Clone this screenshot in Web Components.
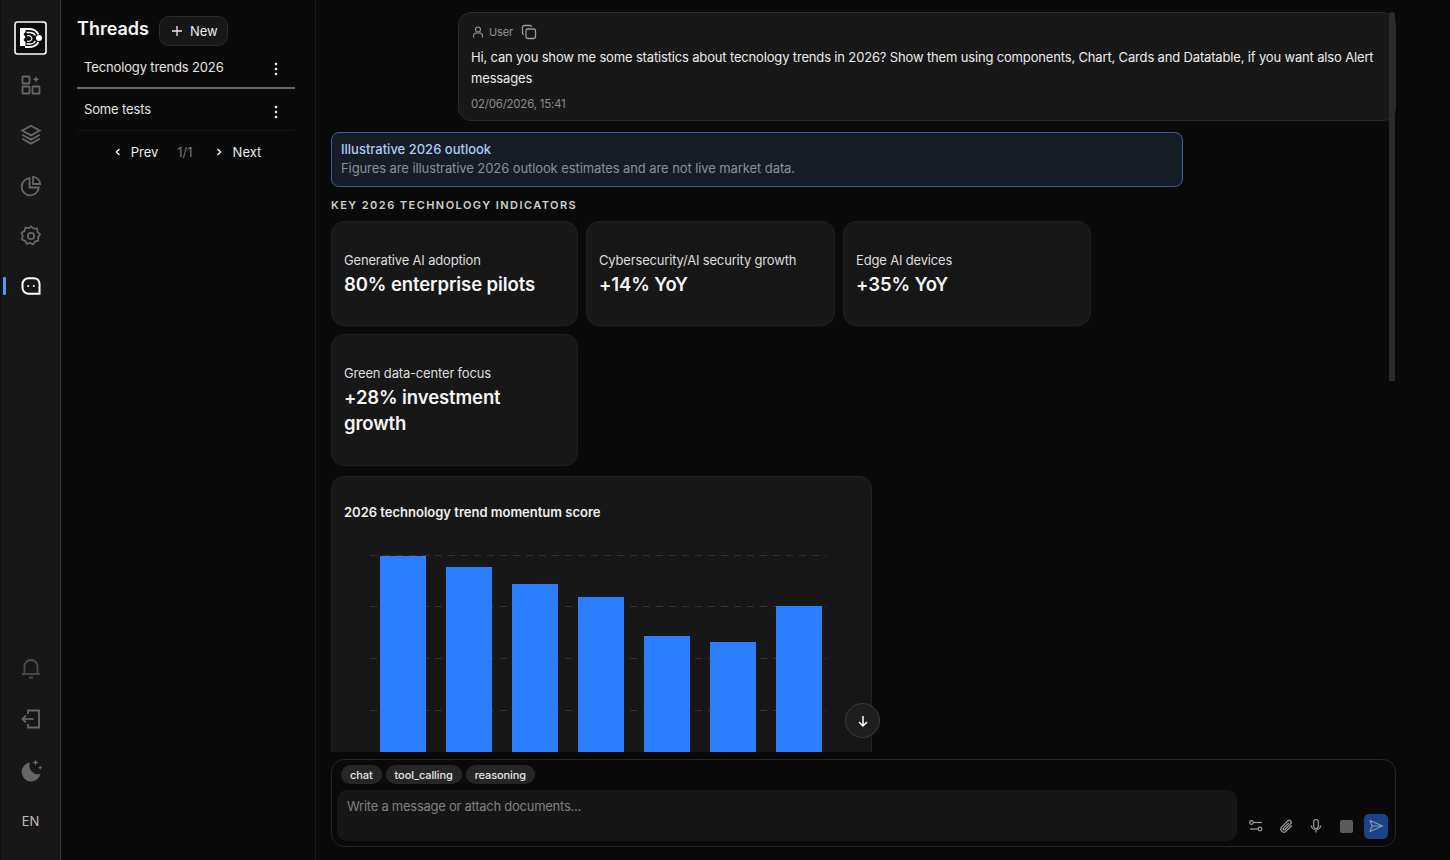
<!DOCTYPE html>
<html lang="en">
<head>
<meta charset="utf-8">
<title>Threads</title>
<style>
  html, body { margin: 0; height: 100%; background: #0a0a0a; }
  body { font-family: Inter, "Liberation Sans", sans-serif; color: #f2f2f2; overflow: hidden; }
</style>
</head>
<body>
<app-shell>
  <side-rail slot="rail"></side-rail>
  <thread-panel slot="threads"></thread-panel>
  <chat-view slot="chat"></chat-view>
</app-shell>

<script>
  class AppShell extends HTMLElement {
    constructor() {
      super();
      this.attachShadow({ mode: "open" }).innerHTML = `
      <style>
        :host { display: grid; grid-template-columns: 61px 255px 1fr; height: 860px; width: 1450px; }
      </style>
      <slot name="rail"></slot><slot name="threads"></slot><slot name="chat"></slot>`;
    }
  }

  const railIcons = {
    grid: `<rect x="3.5" y="3.5" width="7" height="7" rx=".6"/><rect x="3.5" y="13.5" width="7" height="7" rx=".6"/><rect x="13.5" y="13.5" width="7" height="7" rx=".6"/><path d="M17 3l1 2.2 2.4 1-2.4 1L17 10l-1-2.8-2.4-1 2.4-1z" fill="currentColor" stroke="none"/>`,
    layers: `<path d="M12 2.8l8.8 4.8L12 12.4 3.2 7.6z"/><path d="M3.2 11.8l8.8 4.8 8.8-4.8"/><path d="M3.2 15.8l8.8 4.8 8.8-4.8"/>`,
    pie: `<path d="M10.500 4.200a8.600 8.600 0 1 0 9.300 9.300h-9.300z"/><path d="M14 2.800a7.600 7.600 0 0 1 7.200 7.200H14z"/>`,
    gear: `<path d="M12 2.400l2.600 2.300 3.500-.2.400 3.500 2.600 2.300-2 2.900.3 3.500-3.400.8-2 2.900-3-1.700-3.200 1.200-1.600-3.100-3.300-1.300.9-3.400-1.300-3.200 3-1.800 1-3.400 3.400.5z" stroke-linejoin="round"/><circle cx="12" cy="12" r="3.200"/>`,
    chat: `<path d="M9.500 4.200h5.500a5.500 5.500 0 0 1 5.500 5.500v10.100H9.500A6 6 0 0 1 3.500 13.800V10.200a6 6 0 0 1 6-6z" stroke-width="2"/><circle cx="9.200" cy="12" r="1" fill="currentColor" stroke="none"/><circle cx="14.800" cy="12" r="1" fill="currentColor" stroke="none"/>`,
    bell: `<path d="M5.500 18V10.500a6.500 6.500 0 0 1 13 0V18"/><path d="M2.800 18h18.400"/><path d="M10 21.500h4"/>`,
    logout: `<path d="M9 7V3.500h11v17H9V17"/><path d="M14.500 12H3.500"/><path d="M7 8.500L3.500 12 7 15.500"/>`,
    moon: `<path d="M11 4.500a9.500 9.500 0 1 0 10.500 11.200A8.500 8.500 0 0 1 11 4.500z" fill="currentColor" stroke="none"/><path d="M16.500 1.500l.9 2.100 2.100.9-2.100.9-.9 2.100-.9-2.100-2.100-.9 2.100-.9zM21.200 7.500l.7 1.500 1.500.7-1.500.7-.7 1.500-.7-1.500-1.500-.7 1.500-.7z" fill="currentColor" stroke="none"/>`,
  };

  class RailItem extends HTMLElement {
    constructor() {
      super();
      this.attachShadow({ mode: "open" });
    }
    connectedCallback() {
      const active = this.hasAttribute("active");
      const dim = this.hasAttribute("dim");
      this.shadowRoot.innerHTML = `
      <style>
        :host { display: flex; position: relative; height: 51px; align-items: center; justify-content: center; color: ${active ? "#fff" : dim ? "#4d4d4d" : "#666"}; }
        svg { width: 24px; height: 24px; fill: none; stroke: currentColor; stroke-width: 1.800; }
        i { position: absolute; left: 2px; top: 16px; width: 3px; height: 18px; border-radius: 1px; background: #5796ea; }
      </style>
      ${active ? "<i></i>" : ""}
      <svg viewBox="0 0 24 24">${railIcons[this.getAttribute("icon")]}</svg>`;
    }
  }

  class SideRail extends HTMLElement {
    constructor() {
      super();
      this.attachShadow({ mode: "open" }).innerHTML = `
      <style>
        :host { display: flex; flex-direction: column; background: #171717; border-right: 1px solid #3d3d3d; border-left: 1px solid #0e0e0e; box-sizing: border-box; padding: 20px 0 14px; }
        .logo { display: block; width: 33px; height: 34px; margin: 1px auto 5px; }
        .top { display: flex; flex-direction: column; }
        .top rail-item { height: 50.250px; }
        .bottom { margin-top: auto; display: flex; flex-direction: column; }
        .lang { height: 51px; display: flex; align-items: center; justify-content: center; font-size: 13px; color: #bdbdbd; }
      </style>
      <svg class="logo" viewBox="0 0 33 34">
        <rect x="1" y="1" width="31" height="32" rx="2.500" fill="#0a0a0a" stroke="#fff" stroke-width="1.600"/>
        <path d="M6 7h5.500v4l-2 2 2 3-2 3 2 2v4H6z" fill="#fff"/>
        <g fill="none" stroke="#fff">
          <path d="M11 8h5a10 10 0 0 1 8.500 5.500" stroke-width="1.800"/>
          <path d="M11 26h5a10 10 0 0 0 8.500-5" stroke-width="1.800"/>
          <path d="M12.500 11.500h3.500a6.500 6.500 0 0 1 5.500 3" stroke-width="1.300"/>
          <path d="M12.500 23h3.500a6.500 6.500 0 0 0 5.500-3" stroke-width="1.300"/>
          <path d="M13 15a3.500 3.500 0 0 1 5 2.500 3.500 3.500 0 0 1-5 2.500" stroke-width="1.300"/>
        </g>
        <circle cx="25" cy="17" r="3" fill="#fff"/>
      </svg>
      <div class="top">
        <rail-item icon="grid"></rail-item>
        <rail-item icon="layers"></rail-item>
        <rail-item icon="pie"></rail-item>
        <rail-item icon="gear"></rail-item>
        <rail-item icon="chat" active></rail-item>
      </div>
      <div class="bottom">
        <rail-item icon="bell" dim></rail-item>
        <rail-item icon="logout"></rail-item>
        <rail-item icon="moon"></rail-item>
        <div class="lang">EN</div>
      </div>`;
    }
  }

  class ThreadRow extends HTMLElement {
    constructor() {
      super();
      this.attachShadow({ mode: "open" }).innerHTML = `
      <style>
        :host { display: flex; justify-content: space-between; font-size: 13px; line-height: 16px; letter-spacing: -0.140px; color: #e4e4e4; padding: 12px 13px 0 7px; height: 29px; border-bottom: 1px solid #161616; }
        :host([selected]) { padding-top: 9px; height: 28px; border-bottom: 2px solid #6a6a6a; }
        svg { width: 12px; height: 16px; margin-top: 3px; fill: #ededed; }
        :host([selected]) svg { margin-top: 2px; }
      </style>
      <span><slot></slot></span>
      <svg viewBox="0 0 12 16"><circle cx="6" cy="3" r="1.300"/><circle cx="6" cy="8" r="1.300"/><circle cx="6" cy="13" r="1.300"/></svg>`;
    }
  }

  class ThreadPanel extends HTMLElement {
    constructor() {
      super();
      this.attachShadow({ mode: "open" }).innerHTML = `
      <style>
        :host { display: block; background: #0a0a0a; border-right: 1px solid #1b1b1b; padding: 16px 20px 0 16px; box-sizing: border-box; }
        header { display: flex; align-items: center; gap: 10px; height: 30px; }
        h2 { margin: -5px 0 0; font-size: 18px; font-weight: 600; color: #f5f5f5; }
        button { font: inherit; display: flex; align-items: center; color: #ececec; }
        .new { height: 30px; width: 69px; box-sizing: border-box; gap: 6px; padding: 0 0 0 10px; font-size: 13px; background: #171717; border: 1px solid #2b2b2b; border-radius: 10px; }
        .new svg { width: 14px; height: 14px; }
        .list { margin-top: 4px; }
        .pager { display: flex; justify-content: center; align-items: center; font-size: 13px; height: 20px; margin: 11px 0 0 2px; color: #ececec; }
        .pager span { display: flex; align-items: center; gap: 8px; }
        .pager span:last-child { gap: 9px; }
        .pager svg { width: 10px; height: 10px; fill: none; stroke: #ececec; stroke-width: 1.500; }
        .pager em { font-style: normal; color: #777; margin: 0 21px 0 19px; }
      </style>
      <header>
        <h2>Threads</h2>
        <button class="new"><svg viewBox="0 0 14 14" fill="none" stroke="#ececec" stroke-width="1.300"><path d="M7 2v10M2 7h10"/></svg>New</button>
      </header>
      <div class="list">
        <thread-row selected>Tecnology trends 2026</thread-row>
        <thread-row>Some tests</thread-row>
      </div>
      <div class="pager">
        <span><svg viewBox="0 0 10 10"><path d="M6.500 2L3.500 5l3 3"/></svg>Prev</span>
        <em>1/1</em>
        <span><svg viewBox="0 0 10 10"><path d="M3.500 2l3 3-3 3"/></svg>Next</span>
      </div>`;
    }
  }

  class ChatBubble extends HTMLElement {
    constructor() {
      super();
      this.attachShadow({ mode: "open" }).innerHTML = `
      <style>
        :host { display: block; margin-left: 127px; box-sizing: border-box; height: 109px; background: #181818; border: 1px solid #2a2a2a; border-radius: 13px; padding: 9px 12px 0; }
        .who { display: flex; align-items: center; height: 20px; font-size: 11px; letter-spacing: -0.150px; color: #949494; }
        .who svg { width: 14px; height: 14px; fill: none; stroke: #949494; stroke-width: 1.100; margin-right: 4px; }
        .who .copy { width: 16px; height: 16px; margin: 0 0 0 8px; stroke-width: 1.300; stroke: #9a9a9a; }
        p { margin: 5px 0 0; font-size: 13px; line-height: 21px; letter-spacing: -0.160px; color: #ececec; }
        time { display: block; margin-top: 7px; font-size: 11.500px; line-height: 16px; letter-spacing: -0.230px; color: #8a8a8a; }
      </style>
      <div class="who">
        <svg viewBox="0 0 14 14"><circle cx="7" cy="4.500" r="2.500"/><path d="M2.500 12.500V11a3 3 0 0 1 3-3h3a3 3 0 0 1 3 3v1.500"/></svg>
        User
        <svg class="copy" viewBox="0 0 16 16"><rect x="5" y="5" width="9.500" height="9.500" rx="1.800"/><path d="M2.800 10.500A1.500 1.500 0 0 1 1.500 9V3A1.500 1.500 0 0 1 3 1.500h6a1.500 1.500 0 0 1 1.500 1.300"/></svg>
      </div>
      <p><slot></slot></p>
      <time>02/06/2026, 15:41</time>`;
    }
  }

  class InfoAlert extends HTMLElement {
    constructor() {
      super();
      this.attachShadow({ mode: "open" }).innerHTML = `
      <style>
        :host { display: block; box-sizing: border-box; width: 852px; height: 55px; margin-top: 11px; background: #161d26; border: 1px solid #3b5f8c; border-radius: 8px; padding: 7px 9px; }
        b { display: block; font-weight: 500; font-size: 13px; line-height: 18px; color: #a9cdf5; }
        span { display: block; font-size: 13px; line-height: 20px; letter-spacing: -0.090px; color: #8c8f94; }
      </style>
      <b>${this.getAttribute("heading")}</b>
      <span><slot></slot></span>`;
    }
  }

  class StatCard extends HTMLElement {
    constructor() {
      super();
      this.attachShadow({ mode: "open" }).innerHTML = `
      <style>
        :host { display: flex; flex-direction: column; justify-content: center; box-sizing: border-box; padding: 0 12px; background: #171717; border: 1px solid #202020; border-radius: 13px; }
        span { font-size: 13px; line-height: 18px; letter-spacing: -0.170px; color: #dedede; }
        b { margin-top: 2px; font-size: 18.500px; line-height: 26px; letter-spacing: -0.100px; font-weight: 600; color: #f5f5f5; }
      </style>
      <span>${this.getAttribute("label")}</span>
      <b><slot></slot></b>`;
    }
  }

  class BarChart extends HTMLElement {
    constructor() {
      super();
      const tops = [556, 567, 584, 597, 636, 642, 606];
      const bars = tops.map((top, i) =>
        `<rect x="${49 + i * 66}" y="${top - 476}" width="46" height="${860 - top}"/>`).join("");
      const grid = [79.500, 130.500, 182.500, 234.500].map((y) =>
        `<path d="M39 ${y}H496"/>`).join("");
      this.attachShadow({ mode: "open" }).innerHTML = `
      <style>
        :host { display: block; position: relative; box-sizing: border-box; width: 541px; height: 400px; margin-top: 10px; background: #171717; border: 1px solid #222; border-radius: 13px; }
        h3 { margin: 0; position: absolute; left: 12px; top: 26px; font-size: 13px; line-height: 18px; font-weight: 600; color: #f0f0f0; }
        svg { position: absolute; left: -1px; top: -1px; width: 541px; height: 400px; }
      </style>
      <h3>2026 technology trend momentum score</h3>
      <svg viewBox="0 0 541 400">
        <g stroke="#333" stroke-dasharray="7 6" fill="none">${grid}</g>
        <g fill="#2b7fff">${bars}</g>
      </svg>`;
    }
  }

  class ComposerBox extends HTMLElement {
    constructor() {
      super();
      this.attachShadow({ mode: "open" }).innerHTML = `
      <style>
        :host { display: block; box-sizing: border-box; height: 89px; background: #0a0a0a; border: 1px solid #262626; border-radius: 13px; padding: 5px 5px 0; position: relative; }
        .tags { display: flex; gap: 4px; margin-left: 4px; height: 19px; }
        .tags span { display: flex; align-items: center; padding: 0 9px; font-size: 11px; font-weight: 500; letter-spacing: -0.100px; border-radius: 10px; background: #262626; color: #e6e6e6; }
        .row { display: flex; margin-top: 6px; align-items: flex-end; }
        .field { width: 900px; height: 51px; box-sizing: border-box; padding: 8px 10px; border-radius: 10px; background: #161616; font-size: 13px; line-height: 16px; letter-spacing: -0.260px; color: #808080; }
        .tools { display: flex; align-items: center; margin-left: 11px; height: 26px; margin-bottom: 2px; }
        .tools > svg { width: 16px; height: 16px; margin-right: 14px; fill: none; stroke: #a0a0a0; stroke-width: 1.200; flex: none; }
        .stop { width: 13px; height: 13px; background: #5c5c5c; border-radius: 2px; margin: 0 11px 0 2px; flex: none; }
        .send { width: 24px; height: 25px; border-radius: 5px; background: #1a4388; display: flex; align-items: center; justify-content: center; flex: none; }
        .send svg { width: 16px; height: 16px; fill: none; stroke: #8a98ad; stroke-width: 1.200; }
      </style>
      <div class="tags"><span>chat</span><span>tool_calling</span><span>reasoning</span></div>
      <div class="row">
        <div class="field">Write a message or attach documents...</div>
        <div class="tools">
          <svg viewBox="0 0 16 16"><circle cx="3.500" cy="4.500" r="1.800"/><path d="M5.300 4.500H14"/><circle cx="12" cy="11" r="1.800"/><path d="M10.200 11H2"/></svg>
          <svg viewBox="0 0 16 16"><path d="M13.800 7.500l-5.700 5.700a3 3 0 0 1-4.300-4.300l6-6a2 2 0 0 1 2.900 2.800l-6 6a1 1 0 0 1-1.400-1.400l5.300-5.300"/></svg>
          <svg viewBox="0 0 16 16"><rect x="5.700" y="1.500" width="4.600" height="9" rx="2.300"/><path d="M3.500 7.500a4.500 4.500 0 0 0 9 0M8 12v2.500"/></svg>
          <div class="stop"></div>
          <div class="send"><svg viewBox="0 0 16 16"><path d="M2 2.500L14.500 8 2 13.500 4 8zM4 8h10.500" stroke-linejoin="round"/></svg></div>
        </div>
      </div>`;
    }
  }

  class ChatView extends HTMLElement {
    constructor() {
      super();
      this.attachShadow({ mode: "open" }).innerHTML = `
      <style>
        :host { display: flex; flex-direction: column; position: relative; padding: 0 54px 13px 15px; box-sizing: border-box; height: 860px; }
        .scroll { flex: none; height: 752px; overflow: hidden; padding-top: 12px; box-sizing: border-box; }
        h4 { margin: 11px 0 0; font-size: 11px; line-height: 14px; font-weight: 600; letter-spacing: 1.450px; color: #cfcfcf; }
        .cards { display: grid; grid-template-columns: 247px 249px 248px; gap: 8px; margin-top: 9px; }
        .cards stat-card { height: 105px; }
        .cards stat-card.tall { height: 132px; }
        .thumb { position: absolute; left: 1073px; top: 12px; width: 6px; height: 369px; background: #2b2b2b; border-radius: 3px 3px 0 0; }
        .down { position: absolute; left: 529px; top: 703px; width: 33px; height: 33px; border-radius: 50%; background: #1e1e1e; border: 1px solid #3a3a3a; display: flex; align-items: center; justify-content: center; }
        .down svg { width: 14px; height: 14px; fill: none; stroke: #fff; stroke-width: 1.500; }
        composer-box { margin-top: 7px; }
      </style>
      <div class="scroll">
        <chat-bubble>Hi, can you show me some statistics about tecnology trends in 2026? Show them using components, Chart, Cards and Datatable, if you want also Alert messages</chat-bubble>
        <info-alert heading="Illustrative 2026 outlook">Figures are illustrative 2026 outlook estimates and are not live market data.</info-alert>
        <h4>KEY 2026 TECHNOLOGY INDICATORS</h4>
        <div class="cards">
          <stat-card label="Generative AI adoption">80% enterprise pilots</stat-card>
          <stat-card label="Cybersecurity/AI security growth">+14% YoY</stat-card>
          <stat-card label="Edge AI devices">+35% YoY</stat-card>
          <stat-card class="tall" label="Green data-center focus">+28% investment growth</stat-card>
        </div>
        <bar-chart></bar-chart>
      </div>
      <div class="thumb"></div>
      <div class="down"><svg viewBox="0 0 14 14"><path d="M7 2v10M3 8l4 4 4-4"/></svg></div>
      <composer-box></composer-box>`;
    }
  }

  customElements.define("rail-item", RailItem);
  customElements.define("side-rail", SideRail);
  customElements.define("thread-row", ThreadRow);
  customElements.define("thread-panel", ThreadPanel);
  customElements.define("chat-bubble", ChatBubble);
  customElements.define("info-alert", InfoAlert);
  customElements.define("stat-card", StatCard);
  customElements.define("bar-chart", BarChart);
  customElements.define("composer-box", ComposerBox);
  customElements.define("chat-view", ChatView);
  customElements.define("app-shell", AppShell);
</script>
</body>
</html>
